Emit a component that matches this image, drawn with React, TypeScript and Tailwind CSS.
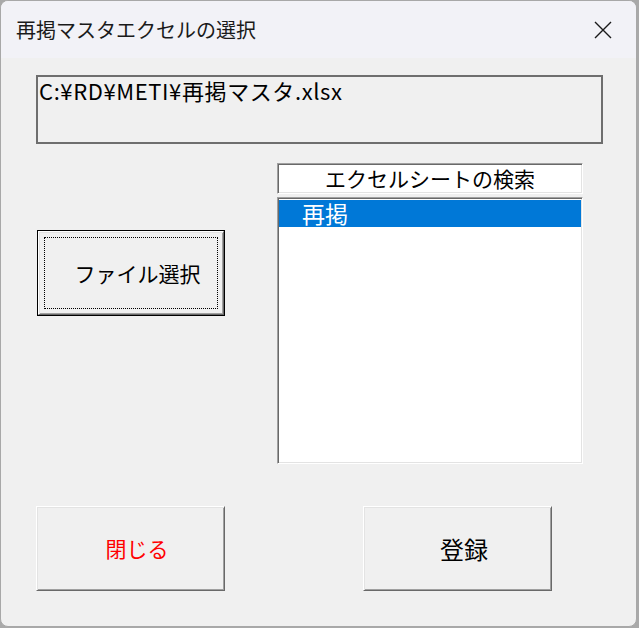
const font = { fontFamily: '"Noto Sans CJK JP", "Liberation Sans", sans-serif' };

function CloseIcon() {
  return (
    <svg width="18" height="18" viewBox="0 0 18 18" className="text-[#1a1a1a]">
      <path d="M1 1 L17 17 M17 1 L1 17" stroke="currentColor" strokeWidth="1.4" fill="none" />
    </svg>
  );
}

function RaisedButton({ label, red, isDefault, size }: { label: string; red?: boolean; isDefault?: boolean; size?: string }) {
  const inner = (
    <div className="flex-1 flex border border-t-white border-l-white border-r-[#696969] border-b-[#696969] shadow-[inset_1px_1px_0_#e3e3e3,inset_-1px_-1px_0_#a0a0a0] bg-[#f0f0f0]">
      <div className={`flex-1 m-[5px] flex items-center justify-center pl-[13px] ${isDefault ? 'border border-dotted border-black' : 'border border-transparent'}`}>
        <span className={`${size ?? 'text-[21px]'} leading-none ${red ? 'text-[#ff0000]' : 'text-black'}`}>{label}</span>
      </div>
    </div>
  );
  if (isDefault) {
    return <div className="flex w-full h-full border border-black">{inner}</div>;
  }
  return <div className="flex w-full h-full">{inner}</div>;
}

export default function App() {
  return (
    <div className="w-[639px] h-[628px] bg-[#a9a9a9] overflow-hidden" style={font}>
      <div className="w-[637px] h-[627px] rounded-[8px] border border-[#a8a8a8] bg-[#f0f0f0] overflow-hidden flex flex-col">
        {/* title bar */}
        <div className="h-[57px] shrink-0 bg-[#f2f2f7] flex items-center justify-between pl-[15px] pr-[24px]">
          <span className="text-[20px] text-[#1a1a1a] leading-none pt-[1px]">再掲マスタエクセルの選択</span>
          <CloseIcon />
        </div>

        {/* body */}
        <div className="flex-1 flex flex-col">
          <div className="ml-[35px] mt-[17px] w-[567px] h-[69px] border-2 border-[#6e6e6e] px-[1px] pt-[1px]">
            <span className="text-[22px] leading-[24px] text-black tracking-[0.6px]">C:¥RD¥METI¥再掲マスタ.xlsx</span>
          </div>

          <div className="flex mt-[19px]">
            <div className="ml-[36px] w-[188px] pt-[67px]">
              <div className="h-[86px]">
                <RaisedButton label="ファイル選択" isDefault />
              </div>
            </div>

            <div className="ml-[52px] w-[306px] flex flex-col gap-[3px]">
              <div className="h-[31px] bg-white border border-t-[#a0a0a0] border-l-[#a0a0a0] border-r-white border-b-white shadow-[inset_1px_1px_0_#696969,inset_-1px_-1px_0_#e3e3e3] flex items-center justify-center">
                <span className="text-[21px] leading-none text-black">エクセルシートの検索</span>
              </div>
              <div className="h-[267px] bg-white border border-t-[#a0a0a0] border-l-[#a0a0a0] border-r-white border-b-white shadow-[inset_1px_1px_0_#696969,inset_-1px_-1px_0_#e3e3e3] pt-[2px] pl-[1px] pr-[1px]">
                <div className="h-[27px] bg-[#0078d7] flex items-center pl-[23px]">
                  <span className="text-[23px] leading-none text-white">再掲</span>
                </div>
              </div>
            </div>
          </div>

          <div className="flex mt-[42px]">
            <div className="ml-[35px] w-[189px] h-[85px]">
              <RaisedButton label="閉じる" red />
            </div>
            <div className="ml-[138px] w-[189px] h-[85px]">
              <RaisedButton label="登録" size="text-[24px]" />
            </div>
          </div>
        </div>
      </div>
    </div>
  );
}
